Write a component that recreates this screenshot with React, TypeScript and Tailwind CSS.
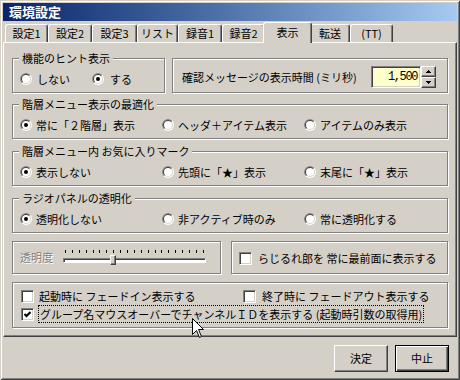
import React from "react";

function Radio({ checked }: { checked?: boolean }) {
  return (
    <svg width="12" height="12" viewBox="0 0 12 12" className="shrink-0 block">
      <circle cx="6" cy="6" r="6" fill="#ffffff" />
      <path d="M1.757 10.243A6 6 0 0 1 10.243 1.757L6 6Z" fill="#808080" />
      <circle cx="6" cy="6" r="5" fill="#D4D0C8" />
      <path d="M2.464 9.536A5 5 0 0 1 9.536 2.464L6 6Z" fill="#404040" />
      <circle cx="6" cy="6" r="4" fill="#ffffff" />
      {checked && <circle cx="6" cy="6" r="2" fill="#000000" />}
    </svg>
  );
}

function Check({ checked }: { checked?: boolean }) {
  return (
    <div className="w-[13px] h-[13px] shrink-0 border border-t-[#808080] border-l-[#808080] border-r-white border-b-white bg-white shadow-[inset_1px_1px_0_#404040,inset_-1px_-1px_0_#D4D0C8] flex items-center justify-center">
      {checked && (
        <svg width="7" height="7" viewBox="0 0 7 7" className="block">
          <path d="M0.5 3 L2.5 5 L6.5 1" stroke="#000" strokeWidth="2" fill="none" />
        </svg>
      )}
    </div>
  );
}

function Group({
  label,
  className,
  children,
}: {
  label?: string;
  className: string;
  children?: React.ReactNode;
}) {
  return (
    <div
      className={`relative border border-[#808080] shadow-[inset_1px_1px_0_#ffffff,1px_1px_0_#ffffff] ${className}`}
    >
      {label && (
        <span className="absolute left-[6px] top-[-7px] px-[3px] bg-[#D4D0C8] leading-[13px] whitespace-nowrap">
          {label}
        </span>
      )}
      {children}
    </div>
  );
}

function RadioItem({ label, checked }: { label: string; checked?: boolean }) {
  return (
    <div className="w-[142px] flex items-center gap-[4px] h-[12px]">
      <Radio checked={checked} />
      <span className="leading-[13px] whitespace-nowrap">{label}</span>
    </div>
  );
}

function Tab({ label, w }: { label: string; w: string }) {
  return (
    <div
      className={`${w} h-[18px] flex items-center justify-center border-t border-l border-r border-t-white border-l-white border-r-[#404040] shadow-[inset_-1px_0_0_#808080] rounded-t-[3px] leading-[13px] whitespace-nowrap`}
    >
      {label}
    </div>
  );
}

function Spin({ up }: { up?: boolean }) {
  return (
    <div className="h-[11px] w-[15px] flex items-center justify-center border border-t-white border-l-white border-b-[#404040] border-r-[#404040] shadow-[inset_-1px_-1px_0_#808080] bg-[#D4D0C8]">
      <svg width="5" height="3" viewBox="0 0 5 3" className="block" shapeRendering="crispEdges">
        {up ? <path d="M2.5 0L5 3H0Z" fill="#000" /> : <path d="M0 0H5L2.5 3Z" fill="#000" />}
      </svg>
    </div>
  );
}

export default function App() {
  const ticks = Array.from({ length: 21 });
  return (
    <div className="relative w-[460px] h-[380px] overflow-hidden bg-[#D4D0C8] p-[3px] flex flex-col text-[11px] leading-[13px] text-black font-['Noto_Sans_CJK_JP','Noto_Sans_CJK_SC',sans-serif] shadow-[inset_1px_1px_0_#D4D0C8,inset_-1px_-1px_0_#404040,inset_2px_2px_0_#ffffff,inset_-2px_-2px_0_#808080]">
      {/* title bar */}
      <div className="h-[18px] shrink-0 flex items-center pl-[6px] bg-linear-to-r from-[#0A246A] to-[#A6CAF0] text-white font-bold text-[13px] leading-[16px]">
        環境設定
      </div>

      {/* tabs */}
      <div className="relative z-10 flex items-end h-[20px] mt-[1px] pl-[2px] shrink-0">
        <Tab label="設定1" w="w-[43px]" />
        <Tab label="設定2" w="w-[44px]" />
        <Tab label="設定3" w="w-[45px]" />
        <Tab label="リスト" w="w-[41px]" />
        <Tab label="録音1" w="w-[44px]" />
        <Tab label="録音2" w="w-[43px]" />
        <div className="w-[49px] h-[21px] -mx-[2px] mb-[-1px] relative z-10 bg-[#D4D0C8] flex items-center justify-center pb-[2px] border-t border-l border-r border-t-white border-l-white border-r-[#404040] shadow-[inset_-1px_0_0_#808080] rounded-t-[3px] leading-[13px]">
          表示
        </div>
        <Tab label="転送" w="w-[40px]" />
        <Tab label="(TT)" w="w-[43px]" />
      </div>

      {/* panel */}
      <div className="h-[295px] shrink-0 border-t border-l border-r border-b border-t-white border-l-white border-r-[#404040] border-b-[#404040] shadow-[inset_-1px_-1px_0_#808080] pt-[15px] pl-[8px] pr-[8px] flex flex-col">
        {/* row 1 */}
        <div className="flex gap-[7px]">
          <Group label="機能のヒント表示" className="w-[153px] h-[35px] pt-[14px] pl-[7px]">
            <div className="flex items-center h-[12px]">
              <div className="w-[72px] flex items-center gap-[5px]">
                <Radio />
                <span className="leading-[13px]">しない</span>
              </div>
              <div className="flex items-center gap-[6px]">
                <Radio checked />
                <span className="leading-[13px]">する</span>
              </div>
            </div>
          </Group>
          <Group className="flex-1 h-[35px] pt-[7px] pl-[9px] pr-[11px]">
            <div className="flex items-center h-[22px]">
              <span className="flex-1 whitespace-nowrap leading-[13px]">確認メッセージの表示時間 (ミリ秒)</span>
              <div className="w-[50px] h-[22px] border border-t-[#808080] border-l-[#808080] border-b-white border-r-white shadow-[inset_1px_1px_0_#404040,inset_-1px_-1px_0_#D4D0C8] bg-[#FFFFCC] flex items-center justify-end pr-[3px] font-['Liberation_Mono',monospace] text-[12px] tracking-[-1.4px]">
                1,500
              </div>
              <div className="flex flex-col">
                <Spin up />
                <Spin />
              </div>
            </div>
          </Group>
        </div>

        <Group label="階層メニュー表示の最適化" className="mt-[11px] h-[35px] pt-[14px] pl-[7px]">
          <div className="flex">
            <RadioItem label="常に「２階層」表示" checked />
            <RadioItem label="ヘッダ＋アイテム表示" />
            <RadioItem label="アイテムのみ表示" />
          </div>
        </Group>

        <Group label="階層メニュー内 お気に入りマーク" className="mt-[12px] h-[35px] pt-[14px] pl-[7px]">
          <div className="flex">
            <RadioItem label="表示しない" checked />
            <RadioItem label="先頭に「★」表示" />
            <RadioItem label="末尾に「★」表示" />
          </div>
        </Group>

        <Group label="ラジオパネルの透明化" className="mt-[12px] h-[35px] pt-[14px] pl-[7px]">
          <div className="flex">
            <RadioItem label="透明化しない" checked />
            <RadioItem label="非アクティブ時のみ" />
            <RadioItem label="常に透明化する" />
          </div>
        </Group>

        {/* row 6 */}
        <div className="flex gap-[10px] mt-[8px]">
          <Group className="w-[209px] h-[33px] flex items-center pl-[7px] gap-[10px]">
            <span className="text-[#808080] [text-shadow:1px_1px_0_#ffffff] leading-[13px] w-[33px] whitespace-nowrap">透明度</span>
            <div className="relative w-[143px] flex flex-col mb-[3px]">
              <div className="h-[3px] flex justify-between px-[2px]">
                {ticks.map((_, i) => (
                  <div key={i} className="w-[1px] h-[3px] bg-black" />
                ))}
              </div>
              <div className="mt-[5px] h-[5px] border border-t-[#808080] border-l-[#808080] border-b-white border-r-white shadow-[inset_1px_1px_0_#404040] bg-white" />
              <div className="absolute left-[47px] top-[5px] w-[6px] h-[10px] bg-[#D4D0C8] border border-t-white border-l-white border-b-[#404040] border-r-[#404040] shadow-[inset_-1px_-1px_0_#808080]" />
            </div>
          </Group>
          <Group className="flex-1 h-[33px] flex items-center pl-[7px] pt-[2px] gap-[6px]">
            <Check />
            <span className="whitespace-nowrap leading-[13px]">らじるれ郎を 常に最前面に表示する</span>
          </Group>
        </div>

        {/* row 7 */}
        <Group className="mt-[8px] h-[46px] pt-[4px] pl-[8px] flex flex-col">
          <div className="h-[18px] flex items-center">
            <div className="w-[222px] flex items-center gap-[5px]">
              <Check />
              <span className="whitespace-nowrap leading-[13px]">起動時に フェードイン表示する</span>
            </div>
            <div className="flex items-center gap-[6px]">
              <Check />
              <span className="whitespace-nowrap leading-[13px]">終了時に フェードアウト表示する</span>
            </div>
          </div>
          <div className="h-[18px] flex items-center gap-[4px]">
            <Check checked />
            <span className="h-[18px] flex items-center border border-dotted border-black px-[1px] whitespace-nowrap leading-[13px]">
              グループ名マウスオーバーでチャンネルＩＤを表示する (起動時引数の取得用)
            </span>
          </div>
        </Group>
      </div>

      {/* buttons */}
      <div className="flex justify-end gap-[7px] pr-[8px] mt-[8px]">
        <div className="w-[54px] h-[27px] flex items-center justify-center border border-t-white border-l-white border-b-[#404040] border-r-[#404040] shadow-[inset_-1px_-1px_0_#808080] leading-[13px]">
          決定
        </div>
        <div className="w-[54px] h-[27px] flex items-center justify-center border border-black shadow-[inset_1px_1px_0_#ffffff,inset_-1px_-1px_0_#404040,inset_-2px_-2px_0_#808080] leading-[13px]">
          中止
        </div>
      </div>

      {/* mouse cursor */}
      <svg
        width="13"
        height="21"
        viewBox="0 0 13 21"
        className="absolute left-[192px] top-[318px] z-20"
      >
        <path
          d="M0.5 0.5V16.5L4.5 12.5L7.5 19.5L9.5 18.5L6.5 11.5H11.5Z"
          fill="#ffffff"
          stroke="#000000"
          strokeWidth="1"
        />
      </svg>
    </div>
  );
}
